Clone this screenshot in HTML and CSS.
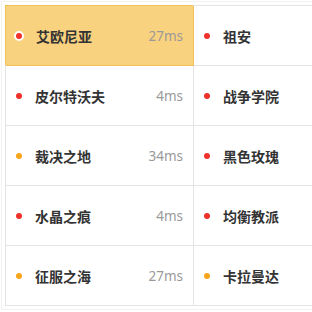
FILE: index.html
```html
<!doctype html>
<html>
<head>
	<title>Servers</title>
	<meta charset="utf-8"/>
	<link rel="stylesheet" href="styles.css">
</head>
<body>
	<div class="frame">
		<div class="board">
			<div class="cell active"><span class="dot red"></span><span class="name">艾欧尼亚</span><span class="ping">27ms</span></div>
			<div class="cell"><span class="dot red"></span><span class="name">祖安</span><span class="ping"></span></div>
			<div class="cell"><span class="dot red"></span><span class="name">皮尔特沃夫</span><span class="ping">4ms</span></div>
			<div class="cell"><span class="dot red"></span><span class="name">战争学院</span><span class="ping"></span></div>
			<div class="cell"><span class="dot orange"></span><span class="name">裁决之地</span><span class="ping">34ms</span></div>
			<div class="cell"><span class="dot red"></span><span class="name">黑色玫瑰</span><span class="ping"></span></div>
			<div class="cell"><span class="dot red"></span><span class="name">水晶之痕</span><span class="ping">4ms</span></div>
			<div class="cell"><span class="dot red"></span><span class="name">均衡教派</span><span class="ping"></span></div>
			<div class="cell"><span class="dot orange"></span><span class="name">征服之海</span><span class="ping">27ms</span></div>
			<div class="cell"><span class="dot orange"></span><span class="name">卡拉曼达</span><span class="ping"></span></div>
		</div>
	</div>
</body>
</html>
```

FILE: styles.css
```css
body {
	margin: 0;
	background: #fff;
	overflow: hidden;
	font-family: "Noto Sans", "Noto Sans CJK SC", sans-serif;
}
.frame {
	margin: 1px 0 1px 1px;
	padding: 3px 0 3px 3px;
	border: 1px solid #f2f2f2;
	border-right: none;
	overflow: hidden;
}
.board {
	display: grid;
	grid-template-columns: 188px 188px;
	border-top: 1px solid #e4e4e4;
	border-left: 1px solid #e4e4e4;
}
.cell {
	display: flex;
	align-items: center;
	height: 59px;
	padding: 0 10px 0 8px;
	border-right: 1px solid #e4e4e4;
	border-bottom: 1px solid #e4e4e4;
}
.cell.active {
	background: #f9d27f;
	border-color: #f1c157;
	box-shadow: -1px -1px 0 #f1c157;
}
.dot {
	width: 6px;
	height: 6px;
	border-radius: 50%;
	margin: 0 2px;
	flex: none;
}
.active .dot {
	margin: 0;
	border: 2px solid #fff;
}
.red {
	background: #f0302a;
}
.orange {
	background: #f7a51c;
}
.name {
	margin-left: 11px;
	font-size: 14px;
	font-weight: bold;
	color: #333;
	flex: 1;
}
.active .name {
	margin-left: 12px;
}
.ping {
	font-size: 13.5px;
	color: #999;
}
```
